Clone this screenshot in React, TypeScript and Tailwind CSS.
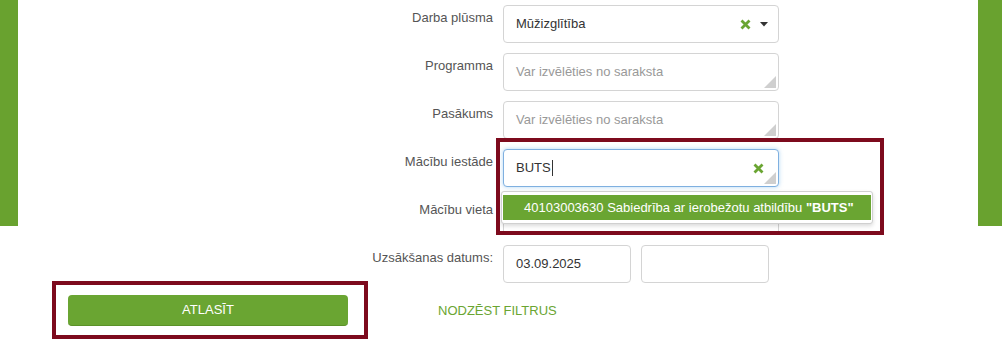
import React from "react";

const Grip = () => (
  <svg className="absolute right-[2px] bottom-[2px]" width="12" height="12" viewBox="0 0 12 12">
    <polygon points="12,0 12,12 0,12" fill="#cfcfcf" />
  </svg>
);

const XIcon = ({ className = "" }: { className?: string }) => (
  <svg className={className} width="11" height="11" viewBox="0 0 11 11">
    <path d="M1.5 1.5 L9.5 9.5 M9.5 1.5 L1.5 9.5" stroke="#6aa532" strokeWidth="2.8" strokeLinecap="butt" />
  </svg>
);

const Caret = () => (
  <svg width="8" height="5" viewBox="0 0 8 5">
    <polygon points="0,0 8,0 4,4.5" fill="#333" />
  </svg>
);

const Label = ({ children }: { children: React.ReactNode }) => (
  <div className="w-[493px] shrink-0 text-right pt-[3px] text-[13px] leading-[20px] text-[#555]">{children}</div>
);

export default function App() {
  return (
    <div className="relative w-[1002px] h-[345px] bg-white overflow-hidden font-['Liberation_Sans',Arial,sans-serif]">
      {/* decorative side panels */}
      <div className="absolute left-0 top-0 w-[18px] h-[226px] bg-[#69a22f]" />
      <div className="absolute right-0 top-0 w-[24px] h-[226px] bg-[#69a22f]" />

      <div className="relative flex flex-col pt-[5px] gap-[10px]">
        {/* Darba plūsma */}
        <div className="flex">
          <Label>Darba plūsma</Label>
          <div className="ml-[10px] relative w-[276px] h-[38px] border border-[#d4d4d4] rounded-[4px] bg-white flex items-center pl-[12px] pr-[10px]">
            <span className="text-[13px] text-[#333] flex-1">Mūžizglītība</span>
            <XIcon className="mr-[9px]" />
            <Caret />
          </div>
        </div>

        {/* Programma */}
        <div className="flex">
          <Label>Programma</Label>
          <div className="ml-[10px] relative w-[276px] h-[38px] border border-[#d4d4d4] rounded-[4px] bg-white flex items-center pl-[12px]">
            <span className="text-[13px] text-[#999]">Var izvēlēties no saraksta</span>
            <Grip />
          </div>
        </div>

        {/* Pasākums */}
        <div className="flex">
          <Label>Pasākums</Label>
          <div className="ml-[10px] relative w-[276px] h-[38px] border border-[#d4d4d4] rounded-[4px] bg-white flex items-center pl-[12px]">
            <span className="text-[13px] text-[#999]">Var izvēlēties no saraksta</span>
            <Grip />
          </div>
        </div>

        {/* Mācību iestāde */}
        <div className="flex relative">
          <Label>Mācību iestāde</Label>
          <div className="ml-[10px] relative w-[276px] h-[38px] border border-[#7fb0e0] rounded-[4px] bg-white flex items-center pl-[12px] pr-[14px] shadow-[0_0_4px_rgba(102,175,233,0.5)]">
            <span className="text-[13px] text-[#333] flex-1 flex items-center">
              BUTS<span className="inline-block w-px h-[16px] bg-[#333] ml-[1px]" />
            </span>
            <XIcon />
            <Grip />
          </div>
        </div>

        {/* Mācību vieta */}
        <div className="flex">
          <Label>Mācību vieta</Label>
          <div className="ml-[10px] relative w-[276px] h-[38px] border border-[#d4d4d4] rounded-[4px] bg-white" />
        </div>

        {/* Uzsākšanas datums */}
        <div className="flex">
          <Label>Uzsākšanas datums:</Label>
          <div className="ml-[10px] w-[128px] h-[38px] border border-[#d4d4d4] rounded-[4px] bg-white flex items-center pl-[12px]">
            <span className="text-[13px] text-[#333]">03.09.2025</span>
          </div>
          <div className="ml-[10px] w-[128px] h-[38px] border border-[#d4d4d4] rounded-[4px] bg-white" />
        </div>

        {/* buttons */}
        <div className="flex items-center mt-[2px] pl-[68px]">
          <button className="w-[280px] h-[31px] rounded-[4px] bg-[#6aa532] text-white text-[13px] border-b border-[#5b9128]">
            ATLASĪT
          </button>
          <span className="ml-[90px] text-[13px] text-[#6aa532]">NODZĒST FILTRUS</span>
        </div>
      </div>

      {/* dropdown list */}
      <div className="absolute left-[501px] top-[191px] w-[372px] h-[33px] bg-white border border-[#d0d0d0] rounded-[3px] shadow-[0_2px_4px_rgba(0,0,0,0.15)] px-[1px] py-[3px]">
        <div className="h-[25px] bg-[#6aa532] text-white text-[13px] flex items-center pl-[21px]">
          <span className="whitespace-nowrap">
            40103003630 Sabiedrība ar ierobežotu atbildību <b>"BUTS"</b>
          </span>
        </div>
      </div>

      {/* highlight frames */}
      <div className="absolute left-[496px] top-[138px] w-[388px] h-[97px] border-[4px] border-[#7d0a1d]" />
      <div className="absolute left-[52px] top-[281px] w-[316px] h-[58px] border-[4px] border-[#7d0a1d]" />
    </div>
  );
}
